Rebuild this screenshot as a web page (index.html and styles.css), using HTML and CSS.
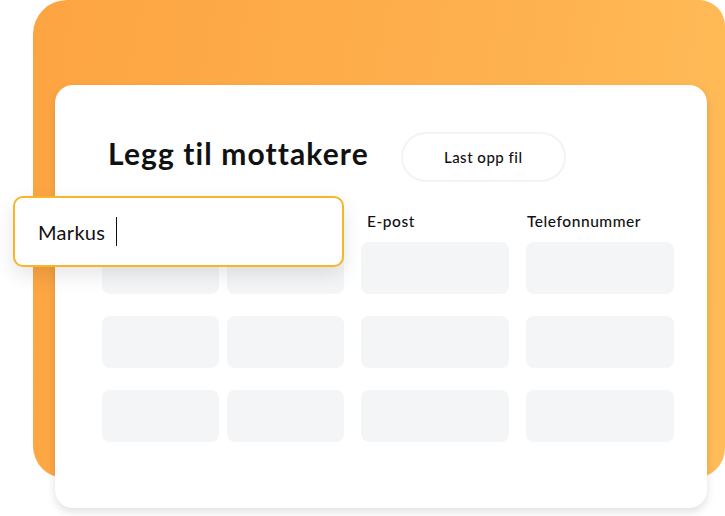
FILE: index.html
```html
<!DOCTYPE html>
<html lang="no">
<head>
    <meta charset="UTF-8">
    <meta name="viewport" content="width=device-width, initial-scale=1.0">
    <title>Legg til mottakere</title>
    <link rel="stylesheet" href="styles.css">
</head>
<body>
    <div class="stage">
        <div class="backdrop"></div>

        <div class="card">
            <div class="card-head">
                <h1 class="title">Legg til mottakere</h1>
                <button class="upload">Last opp fil</button>
            </div>

            <div class="table table-head">
                <div class="label"></div>
                <div class="label"></div>
                <div class="label label-mail">E-post</div>
                <div class="label label-phone">Telefonnummer</div>
            </div>

            <div class="table table-body">
                <div class="cell"></div>
                <div class="cell"></div>
                <div class="cell"></div>
                <div class="cell"></div>

                <div class="cell"></div>
                <div class="cell"></div>
                <div class="cell"></div>
                <div class="cell"></div>

                <div class="cell"></div>
                <div class="cell"></div>
                <div class="cell"></div>
                <div class="cell"></div>
            </div>
        </div>

        <!-- feltet ligger over tabellen -->
        <div class="name-input">
            <span class="name-text">Markus</span>
            <span class="caret"></span>
        </div>
    </div>
</body>
</html>
```

FILE: styles.css
```css
body {
    margin: 0;
    background-color: white;
    font-family: 'Lato', 'Noto Sans', sans-serif;
    color: #111;
}

.stage {
    position: relative;
    width: 725px;
    height: 516px;
    display: grid;
    overflow: hidden;
}

.backdrop,
.card {
    grid-area: 1 / 1;
}

.backdrop {
    margin-left: 33px;
    height: 478px;
    border-radius: 34px 26px 30px 32px;
    background: linear-gradient(100deg, #fda442 0%, #feae4c 50%, #ffbc58 100%);
}

.card {
    margin: 85px 18px 0 55px;
    height: 423px;
    box-sizing: border-box;
    padding: 47px 32px 0 47px;
    background-color: white;
    border-radius: 18px;
    box-shadow: 0 4px 8px rgba(0, 0, 0, 0.12);
}

.card-head {
    display: flex;
    align-items: center;
}

.title {
    margin: 0 0 0 6px;
    font-size: 30px;
    font-weight: 700;
    letter-spacing: 1.1px;
    line-height: 36px;
    padding-bottom: 8px;
}

.upload {
    margin-left: 32px;
    width: 165px;
    height: 50px;
    padding: 0;
    background-color: white;
    border: 2px solid #f3f3f3;
    border-radius: 25px;
    font-family: 'Lato', 'Noto Sans', sans-serif;
    font-size: 15px;
    font-weight: 500;
    letter-spacing: 0.5px;
    color: #111;
    cursor: pointer;
}

.table {
    display: grid;
    grid-template-columns: 117px 117px 157px 157px;
    column-gap: 8px;
}

.table > :nth-child(4n + 3),
.table > :nth-child(4n) {
    margin-left: 9px;
}

.table-head {
    margin-top: 29px;
    margin-bottom: 11px;
}

.table-body {
    grid-auto-rows: 52px;
    row-gap: 22px;
}

.label {
    font-size: 15.5px;
    font-weight: 500;
    letter-spacing: 0.55px;
    line-height: 20px;
}

.label-mail {
    padding-left: 6px;
}

.label-phone {
    padding-left: 1px;
}

.cell {
    background-color: #f3f5f6;
    border-radius: 8px;
}

.name-input {
    position: absolute;
    left: 13px;
    top: 196px;
    width: 331px;
    height: 71px;
    box-sizing: border-box;
    display: flex;
    align-items: center;
    padding-left: 23px;
    background-color: white;
    border: 2px solid #f6b52a;
    border-radius: 10px;
    box-shadow: 0 8px 20px rgba(0, 0, 0, 0.1);
}

.name-text {
    font-size: 20px;
    letter-spacing: 0.3px;
    color: #111;
}

.caret {
    width: 1px;
    height: 29px;
    margin-left: 11px;
    background-color: #111;
}
```
